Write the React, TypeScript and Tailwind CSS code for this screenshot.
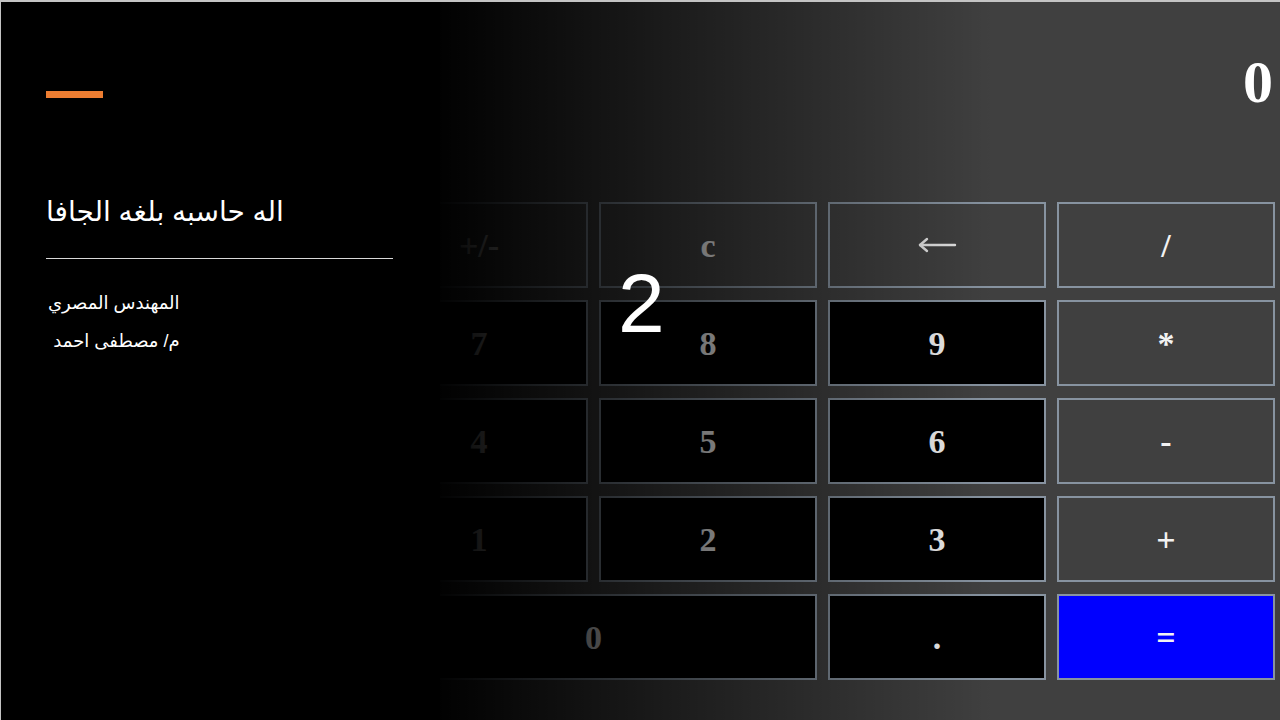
import React from "react";

type Key = {
  label: string;
  kind: "op" | "num" | "eq";
  span?: boolean;
};

const keys: Key[] = [
  { label: "+/-", kind: "op" },
  { label: "c", kind: "op" },
  { label: "←", kind: "op" },
  { label: "/", kind: "op" },
  { label: "7", kind: "num" },
  { label: "8", kind: "num" },
  { label: "9", kind: "num" },
  { label: "*", kind: "op" },
  { label: "4", kind: "num" },
  { label: "5", kind: "num" },
  { label: "6", kind: "num" },
  { label: "-", kind: "op" },
  { label: "1", kind: "num" },
  { label: "2", kind: "num" },
  { label: "3", kind: "num" },
  { label: "+", kind: "op" },
  { label: "0", kind: "num", span: true },
  { label: ".", kind: "num" },
  { label: "=", kind: "eq" },
];

const keyBg = {
  op: "bg-transparent",
  num: "bg-black",
  eq: "bg-[#0000ff]",
};

function BackArrow() {
  return (
    <svg width="40" height="16" viewBox="0 0 40 16" fill="none" stroke="#e6e6e6" strokeWidth="2.4" strokeLinecap="round" strokeLinejoin="round">
      <path d="M3 8 H38" />
      <path d="M10 2 L3 8 L10 14" />
    </svg>
  );
}

function CalcKey({ k }: { k: Key }) {
  return (
    <div
      className={`h-[86px] flex items-center justify-center border-2 border-[#8793a0] text-[34px] font-bold text-[#f2f2f2] ${keyBg[k.kind]} ${
        k.span ? "col-span-2" : ""
      }`}
    >
      {k.label === "←" ? <BackArrow /> : k.label}
    </div>
  );
}

export default function App() {
  return (
    <div className="relative w-[1280px] h-[720px] overflow-hidden bg-black border-t-2 border-l border-[#c4c4c4] flex">
      {/* slide text */}
      <div
        className="w-[439px] shrink-0 pl-[45px] pt-[89px] flex flex-col relative z-10"
        style={{ fontFamily: '"Liberation Sans", "DejaVu Sans", sans-serif' }}
      >
        <div className="h-[7px] w-[57px] bg-[#ed7d31]" />
        <div dir="rtl" className="mt-[97px] w-fit text-[28px] leading-[34px] text-white">
          اله حاسبه بلغه الجافا
        </div>
        <div className="mt-[29px] h-px w-[347px] bg-[#d9d9d9]" />
        <div dir="rtl" className="mt-[25px] w-fit text-right text-[18px] leading-[38px] text-white pl-[2px]">
          <div>المهندس المصري</div>
          <div>م/ مصطفى احمد </div>
        </div>
      </div>

      {/* calculator screenshot */}
      <div
        className="relative flex-1 overflow-hidden bg-[#404040] flex flex-col"
        style={{ fontFamily: '"Liberation Serif", "Times New Roman", serif' }}
      >
        <div className="h-[200px] flex justify-end pr-[7px] pt-[50px]">
          <span className="text-[60px] leading-[60px] font-bold text-white">0</span>
        </div>
        <div className="ml-[-70px] mr-[5px] grid grid-cols-4 gap-x-[11px] gap-y-[12px]">
          {keys.map((k, i) => (
            <CalcKey key={i} k={k} />
          ))}
        </div>
        <div className="pointer-events-none absolute inset-0 bg-[linear-gradient(to_right,rgba(0,0,0,0.98)_0%,rgba(0,0,0,0)_66%)]" />
      </div>

      <div
        className="absolute left-[617px] top-[259px] text-[84px] leading-none text-white z-20"
        style={{ fontFamily: '"Liberation Sans", Arial, sans-serif' }}
      >
        2
      </div>
    </div>
  );
}
